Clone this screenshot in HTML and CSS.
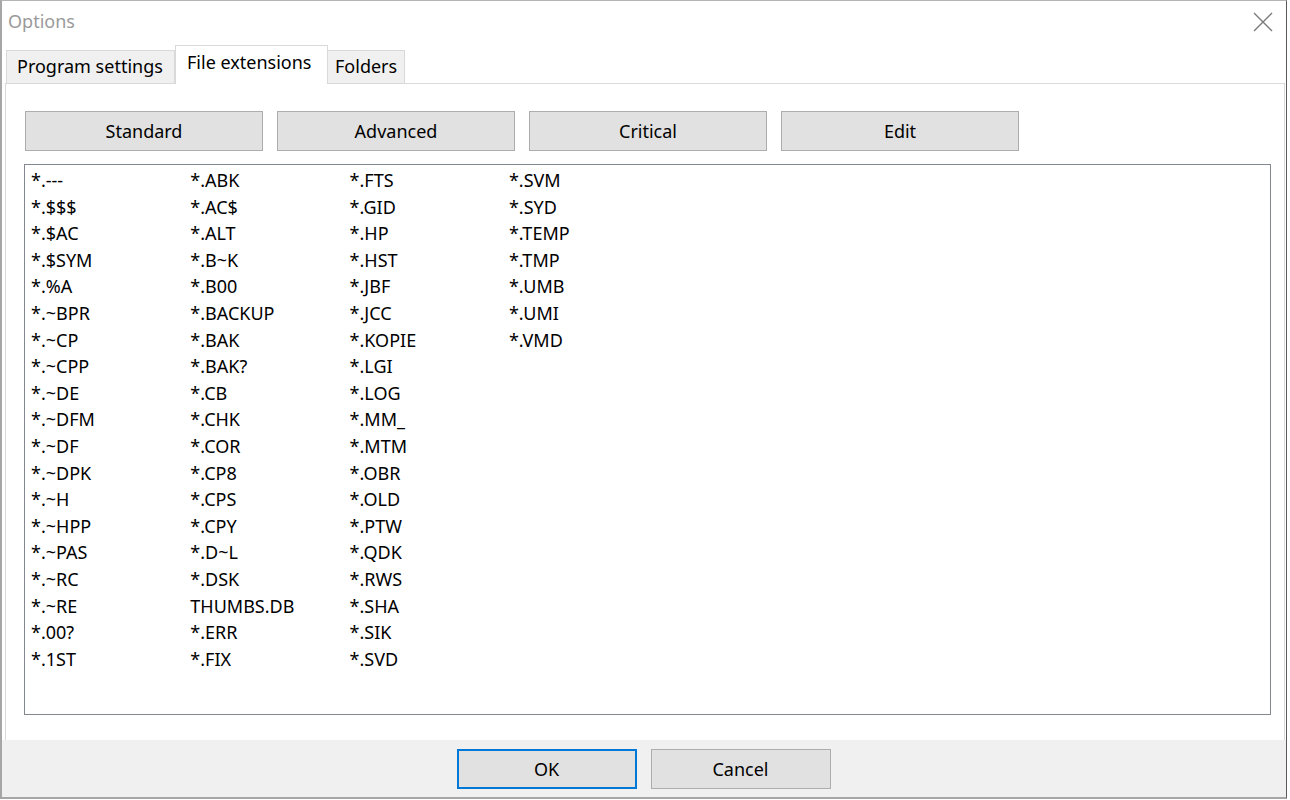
FILE: index.html
```html
<!DOCTYPE html>
<html>
<head>
<meta charset="utf-8">
<title>Options</title>
<link rel="stylesheet" href="styles.css">
</head>
<body>
<div class="window">
  <div class="titlebar">
    <span class="title">Options</span>
    <span class="close">
      <svg width="20" height="20" viewBox="0 0 20 20"><path d="M1 1 L19 19 M19 1 L1 19" stroke="#7a7a7a" stroke-width="1.4" fill="none"/></svg>
    </span>
  </div>
  <div class="tabs">
    <div class="tab tab-first">Program settings</div>
    <div class="tab active">File extensions</div>
    <div class="tab">Folders</div>
  </div>
  <div class="panel">
    <div class="btnrow">
      <button class="btn">Standard</button>
      <button class="btn">Advanced</button>
      <button class="btn">Critical</button>
      <button class="btn">Edit</button>
    </div>
    <div class="listbox">
      <div class="grid">
        <span>*.---</span><span>*.$$$</span><span>*.$AC</span><span>*.$SYM</span><span>*.%A</span><span>*.~BPR</span><span>*.~CP</span><span>*.~CPP</span><span>*.~DE</span><span>*.~DFM</span><span>*.~DF</span><span>*.~DPK</span><span>*.~H</span><span>*.~HPP</span><span>*.~PAS</span><span>*.~RC</span><span>*.~RE</span><span>*.00?</span><span>*.1ST</span>
        <span>*.ABK</span><span>*.AC$</span><span>*.ALT</span><span>*.B~K</span><span>*.B00</span><span>*.BACKUP</span><span>*.BAK</span><span>*.BAK?</span><span>*.CB</span><span>*.CHK</span><span>*.COR</span><span>*.CP8</span><span>*.CPS</span><span>*.CPY</span><span>*.D~L</span><span>*.DSK</span><span>THUMBS.DB</span><span>*.ERR</span><span>*.FIX</span>
        <span>*.FTS</span><span>*.GID</span><span>*.HP</span><span>*.HST</span><span>*.JBF</span><span>*.JCC</span><span>*.KOPIE</span><span>*.LGI</span><span>*.LOG</span><span>*.MM_</span><span>*.MTM</span><span>*.OBR</span><span>*.OLD</span><span>*.PTW</span><span>*.QDK</span><span>*.RWS</span><span>*.SHA</span><span>*.SIK</span><span>*.SVD</span>
        <span>*.SVM</span><span>*.SYD</span><span>*.TEMP</span><span>*.TMP</span><span>*.UMB</span><span>*.UMI</span><span>*.VMD</span>
      </div>
    </div>
  </div>
  <div class="footer">
    <button class="btn btn-foot btn-default">OK</button>
    <button class="btn btn-foot">Cancel</button>
  </div>
</div>
</body>
</html>
```

FILE: styles.css
```css
html, body {
  margin: 0;
  padding: 0;
  background: #ffffff;
}
body {
  font-family: "Noto Sans", "Open Sans", sans-serif;
  color: #000;
  width: 1290px;
  height: 800px;
  overflow: hidden;
}
.window {
  box-sizing: border-box;
  width: 1287px;
  height: 799px;
  border-left: 2px solid #a6a6a6;
  border-right: 1px solid #5a5a5a;
  border-bottom: 2px solid #a6a6a6;
  border-top: 1px solid #b5b5b5;
  display: flex;
  flex-direction: column;
  background: #ffffff;
}
.titlebar {
  height: 43px;
  flex: none;
  display: flex;
  align-items: center;
  justify-content: space-between;
  padding: 0 13px 0 6px;
  box-sizing: border-box;
}
.title {
  font-size: 18px;
  color: #9a9a9a;
  position: relative;
  top: -2px;
}
.close {
  display: flex;
  position: relative;
  top: -1px;
}
.tabs {
  display: flex;
  align-items: flex-end;
  height: 39px;
  flex: none;
  padding-left: 4px;
  position: relative;
  z-index: 1;
}
.tab {
  box-sizing: border-box;
  height: 33px;
  padding: 0 8px 0 9px;
  font-size: 18px;
  line-height: 31px;
  background: #f0f0f0;
  border: 1px solid #d9d9d9;
  border-bottom: none;
  color: #000;
  white-space: nowrap;
}
.tab-first {
  width: 169px;
  padding-left: 10px;
}
.tab + .tab {
  border-left: none;
}
.tab.active {
  height: 39px;
  background: #ffffff;
  line-height: 33px;
  margin-bottom: -1px;
  width: 153px;
  padding-left: 11px;
  border-left: 1px solid #d9d9d9;
  border-right: 1px solid #d9d9d9;
}
.tab.active + .tab {
  width: 77px;
  padding-left: 7px;
}
.panel {
  margin: 0 1px 0 3px;
  border: 1px solid #d9d9d9;
  border-bottom: none;
  background: #ffffff;
  flex: 1;
  display: flex;
  flex-direction: column;
  padding: 27px 13px 25px 18px;
}
.btnrow {
  display: flex;
  gap: 14px;
  margin-bottom: 13px;
  padding-left: 1px;
}
.btn {
  box-sizing: border-box;
  width: 238px;
  height: 40px;
  background: #e1e1e1;
  border: 1px solid #adadad;
  font-family: "Noto Sans", "Open Sans", sans-serif;
  font-size: 18px;
  color: #000;
  padding: 0;
  margin: 0;
}
.listbox {
  box-sizing: border-box;
  width: 1247px;
  flex: 1;
  border: 1px solid #828790;
  background: #ffffff;
  padding: 2px 0 0 6px;
}
.grid {
  display: grid;
  grid-template-rows: repeat(19, 26.6px);
  grid-auto-flow: column;
  grid-auto-columns: 159.3px;
  font-size: 18px;
  line-height: 26.6px;
}
.grid span {
  white-space: nowrap;
}
.footer {
  height: 57px;
  flex: none;
  background: #f0f0f0;
  display: flex;
  justify-content: center;
  align-items: flex-start;
  gap: 14px;
  padding-top: 9px;
  box-sizing: border-box;
  padding-right: 1px;
}
.btn-foot {
  width: 180px;
  height: 40px;
}
.btn-default {
  border: 2px solid #0078d7;
}
```
